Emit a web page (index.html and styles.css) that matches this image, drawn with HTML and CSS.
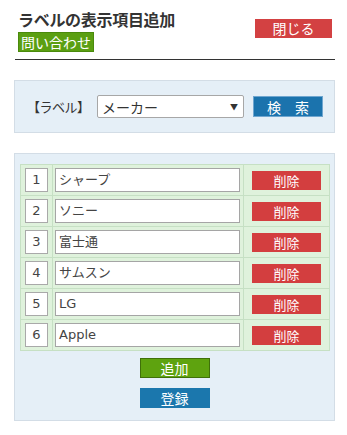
FILE: index.html
```html
<!DOCTYPE html>
<html lang="ja">
<head>
<meta charset="utf-8">
<link rel="stylesheet" href="styles.css">
</head>
<body>
<div class="page">
  <div class="header">
    <div class="head-left">
      <h1 class="title">ラベルの表示項目追加</h1>
      <span class="inquiry">問い合わせ</span>
    </div>
    <button class="btn btn-close">閉じる</button>
  </div>

  <div class="panel search-panel">
    <span class="label">【ラベル】</span>
    <div class="select">
      <span>メーカー</span>
      <span class="arrow">▼</span>
    </div>
    <button class="btn btn-search">検　索</button>
  </div>

  <div class="panel list-panel">
    <table class="items">
      <tr><td class="c-num"><span class="num">1</span></td><td class="c-name"><div class="input">シャープ</div></td><td class="c-del"><button class="btn btn-del">削除</button></td></tr>
      <tr><td class="c-num"><span class="num">2</span></td><td class="c-name"><div class="input">ソニー</div></td><td class="c-del"><button class="btn btn-del">削除</button></td></tr>
      <tr><td class="c-num"><span class="num">3</span></td><td class="c-name"><div class="input">富士通</div></td><td class="c-del"><button class="btn btn-del">削除</button></td></tr>
      <tr><td class="c-num"><span class="num">4</span></td><td class="c-name"><div class="input">サムスン</div></td><td class="c-del"><button class="btn btn-del">削除</button></td></tr>
      <tr><td class="c-num"><span class="num">5</span></td><td class="c-name"><div class="input">LG</div></td><td class="c-del"><button class="btn btn-del">削除</button></td></tr>
      <tr><td class="c-num"><span class="num">6</span></td><td class="c-name"><div class="input">Apple</div></td><td class="c-del"><button class="btn btn-del">削除</button></td></tr>
    </table>
    <div class="actions">
      <button class="btn btn-add">追加</button>
      <button class="btn btn-save">登録</button>
    </div>
  </div>
</div>
</body>
</html>
```

FILE: styles.css
```css
* { box-sizing: border-box; }
body {
  margin: 0;
  background: #fff;
  font-family: "DejaVu Sans", "Noto Sans CJK JP", sans-serif;
  color: #333;
}
.page {
  padding: 0 12px 0 14px;
  width: 347px;
}
.header {
  margin-left: 1px;
  height: 60px;
  border-bottom: 1px solid #333;
  display: flex;
  justify-content: space-between;
  align-items: flex-start;
  padding-left: 3px;
  padding-right: 3px;
}
.head-left {
  display: flex;
  flex-direction: column;
  align-items: flex-start;
}
.title {
  margin: 8px 0 0 0;
  font-family: "Noto Sans CJK JP", sans-serif;
  font-size: 16px;
  font-weight: bold;
  line-height: 22px;
  color: #333;
  letter-spacing: -0.3px;
}
.inquiry {
  margin-top: 2px;
  background: #5b9f12;
  color: #fff;
  font-family: "Noto Sans CJK JP", sans-serif;
  font-size: 14px;
  line-height: 18px;
  padding: 0 2px;
  border: 1px solid #4a8a0c;
}
.btn {
  border: none;
  color: #fff;
  font-family: "Noto Sans CJK JP", sans-serif;
  font-size: 14px;
  padding: 0;
  margin: 0;
  cursor: pointer;
}
.btn-close {
  margin-top: 19px;
  width: 77px;
  height: 19px;
  line-height: 19px;
  background: #d34142;
  font-size: 14px;
}
.panel {
  background: #e5eff7;
  border: 1px solid #d3dde6;
}
.search-panel {
  margin-top: 20px;
  height: 53px;
  display: flex;
  align-items: center;
  padding-left: 12px;
}
.label {
  font-family: "Noto Sans CJK JP", sans-serif;
  font-size: 13px;
  color: #333;
  width: 70px;
  letter-spacing: -0.5px;
}
.select {
  width: 147px;
  height: 23px;
  background: #fff;
  border: 1px solid #a7a7a7;
  border-radius: 2px;
  display: flex;
  justify-content: space-between;
  align-items: center;
  padding: 0 5px 0 4px;
  font-family: "Noto Sans CJK JP", sans-serif;
  font-size: 14px;
  color: #333;
}
.arrow {
  font-size: 8px;
  color: #333;
}
.btn-search {
  margin-left: 9px;
  width: 70px;
  height: 21px;
  background: #1b73ad;
  border: 1px solid #6fa6d0;
  font-size: 14px;
  letter-spacing: 0px;
}
.list-panel {
  margin-top: 20px;
  padding: 10px 5px 12px 5px;
}
.items {
  border-collapse: collapse;
  width: 310px;
}
.items td {
  background: #dff2dc;
  border: 1px solid #c6e0c4;
  height: 31px;
  padding: 0;
  vertical-align: middle;
}
.c-num { width: 32px; text-align: center; }
.num {
  display: inline-block;
  width: 23px;
  height: 24px;
  line-height: 22px;
  background: #fff;
  border: 1px solid #a9a9a9;
  font-size: 13px;
  color: #444;
  text-align: center;
}
.c-name { width: 191px; padding-left: 2px !important; }
.input {
  width: 185px;
  height: 24px;
  line-height: 22px;
  background: #fff;
  border: 1px solid #a5a5a5;
  padding-left: 3px;
  font-size: 13px;
  color: #444;
  font-family: "DejaVu Sans", "Noto Sans CJK JP", sans-serif;
}
.c-del { text-align: center; }
.btn-del {
  width: 69px;
  height: 19px;
  line-height: 19px;
  background: #d33e3f;
  font-size: 13px;
}
.actions {
  display: flex;
  flex-direction: column;
  align-items: center;
  gap: 10px;
  margin-top: 7px;
}
.btn-add {
  width: 70px;
  height: 20px;
  line-height: 18px;
  background: #5ea30f;
  border: 1px solid #3f7009;
  font-size: 14px;
  color: #fff;
}
.btn-save {
  width: 70px;
  height: 20px;
  line-height: 20px;
  background: #1b77ad;
  font-size: 14px;
}
```
